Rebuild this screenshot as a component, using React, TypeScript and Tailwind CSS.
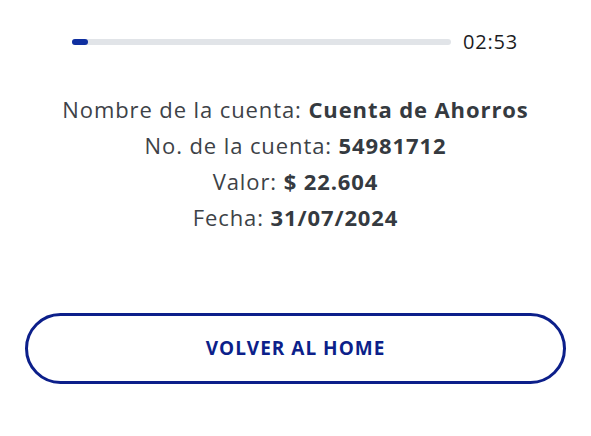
import React from "react";

const rows = [
  { label: "Nombre de la cuenta:", value: "Cuenta de Ahorros" },
  { label: "No. de la cuenta:", value: "54981712" },
  { label: "Valor:", value: "$ 22.604" },
  { label: "Fecha:", value: "31/07/2024" },
];

export default function App() {
  return (
    <div className="w-[591px] h-[436px] bg-white font-['Open_Sans',sans-serif] flex flex-col">
      <div className="flex items-center pl-[72px] pt-[29px] h-[54px]">
        <div className="w-[379px] h-[6px] rounded-full bg-[#e1e4e8]">
          <div className="w-[16px] h-[6px] rounded-full bg-[#0f2fa0]" />
        </div>
        <span className="ml-[12px] text-[20px] tracking-[0.8px] text-[#1c1c1e]">02:53</span>
      </div>
      <div className="flex flex-col items-center mt-[37px] text-[22px] leading-[36px] tracking-[0.9px] text-[#3d4247]">
        {rows.map((r) => (
          <div key={r.label}>
            {r.label} <span className="font-bold text-[#353a40]">{r.value}</span>
          </div>
        ))}
      </div>
      <div className="px-[25px] mt-[78px]">
        <button className="w-full h-[71px] rounded-full border-[3px] border-[#0c1f8a] text-[#0c1f8a] font-bold text-[19px] tracking-[1px]">
          VOLVER AL HOME
        </button>
      </div>
    </div>
  );
}
